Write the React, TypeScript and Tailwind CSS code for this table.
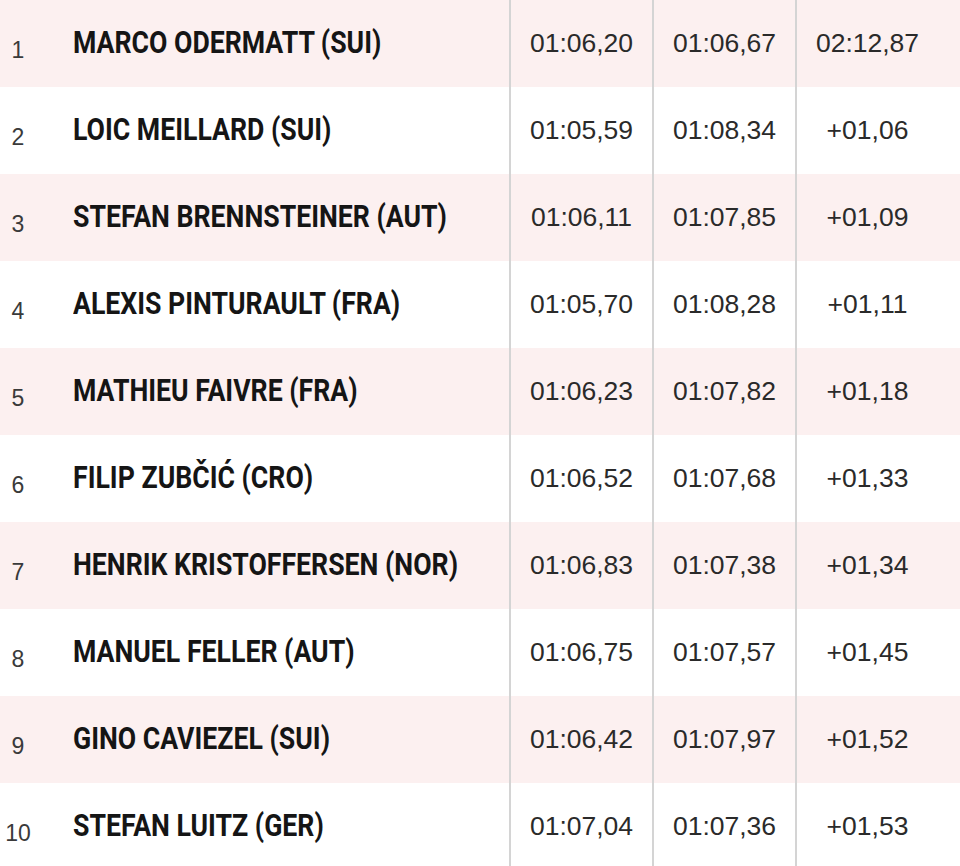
import React from 'react';

type Result = {
  rank: number;
  name: string;
  run1: string;
  run2: string;
  total: string;
};

const results: Result[] = [
  { rank: 1, name: 'MARCO ODERMATT (SUI)', run1: '01:06,20', run2: '01:06,67', total: '02:12,87' },
  { rank: 2, name: 'LOIC MEILLARD (SUI)', run1: '01:05,59', run2: '01:08,34', total: '+01,06' },
  { rank: 3, name: 'STEFAN BRENNSTEINER (AUT)', run1: '01:06,11', run2: '01:07,85', total: '+01,09' },
  { rank: 4, name: 'ALEXIS PINTURAULT (FRA)', run1: '01:05,70', run2: '01:08,28', total: '+01,11' },
  { rank: 5, name: 'MATHIEU FAIVRE (FRA)', run1: '01:06,23', run2: '01:07,82', total: '+01,18' },
  { rank: 6, name: 'FILIP ZUBČIĆ (CRO)', run1: '01:06,52', run2: '01:07,68', total: '+01,33' },
  { rank: 7, name: 'HENRIK KRISTOFFERSEN (NOR)', run1: '01:06,83', run2: '01:07,38', total: '+01,34' },
  { rank: 8, name: 'MANUEL FELLER (AUT)', run1: '01:06,75', run2: '01:07,57', total: '+01,45' },
  { rank: 9, name: 'GINO CAVIEZEL (SUI)', run1: '01:06,42', run2: '01:07,97', total: '+01,52' },
  { rank: 10, name: 'STEFAN LUITZ (GER)', run1: '01:07,04', run2: '01:07,36', total: '+01,53' },
];

const timeCell =
  "w-[143px] shrink-0 h-full flex items-center justify-center border-l-2 border-[#d4d4d4] font-['Liberation_Sans',Arial,sans-serif] text-[26.5px] text-[#2a2a2a]";

const ResultRow = ({ r }: { r: Result }) => (
  <div className={`flex items-center h-[87px] ${r.rank % 2 === 1 ? 'bg-[#fcf0f0]' : 'bg-white'}`}>
    <div className="w-[36px] shrink-0 pt-[14px] text-center font-['Liberation_Sans',Arial,sans-serif] text-[23px] text-[#3a3a3a]">
      {r.rank}
    </div>
    <div className="w-[473px] shrink-0 pl-[37px] overflow-hidden whitespace-nowrap">
      <span className="inline-block origin-left scale-x-[0.86] font-['Roboto',sans-serif] font-bold text-[31px] text-[#151515]">
        {r.name}
      </span>
    </div>
    <div className={timeCell}>{r.run1}</div>
    <div className={timeCell}>{r.run2}</div>
    <div className={timeCell}>{r.total}</div>
    <div className="flex-1" />
  </div>
);

export default function App() {
  return (
    <div className="w-[960px] h-[866px] overflow-hidden bg-white">
      {results.map((r) => (
        <ResultRow key={r.rank} r={r} />
      ))}
    </div>
  );
}
